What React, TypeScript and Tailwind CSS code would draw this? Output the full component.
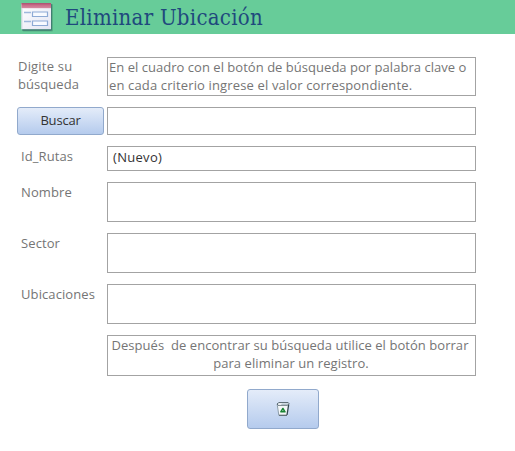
import React from "react";

const box = "w-[369px] shrink-0 border border-[#a3a3a3] bg-white";
const label = "w-[86px] shrink-0 pl-1 pt-px whitespace-nowrap leading-[18px] tracking-[0.1px]";

function FormIcon() {
  return (
    <svg width="34" height="32" viewBox="0 0 34 32" className="shrink-0">
      <defs>
        <linearGradient id="paper" x1="0" y1="0" x2="1" y2="1">
          <stop offset="0" stopColor="#ffffff" />
          <stop offset="1" stopColor="#e3e5f3" />
        </linearGradient>
        <linearGradient id="bar" x1="0" y1="0" x2="0" y2="1">
          <stop offset="0" stopColor="#bd5878" />
          <stop offset="1" stopColor="#d68aa2" />
        </linearGradient>
      </defs>
      <rect x="2.5" y="3" width="30.5" height="27.5" rx="1" fill="#38765f" opacity=".35" />
      <rect x="2" y="3" width="30" height="26.7" rx="1" fill="#315d65" opacity=".6" />
      <rect x="1.5" y="2.2" width="29.5" height="26" fill="url(#paper)" />
      <rect x="1.5" y="2.2" width="29.5" height="5" fill="url(#bar)" />
      <path d="M1.5 2.7H31" stroke="#a95070" />
      <path d="M2 7.2V28.2" stroke="#d8d9e5" />
      <path d="M4 11.5h7M4 20.5h7" stroke="#9eb8dc" strokeWidth="1.4" />
      <path d="M12.5 11h15v4.5h-15zM12.5 20h15v4.5h-15z" fill="#f8faff" stroke="#8eaad5" strokeWidth="1.2" />
    </svg>
  );
}

function BinIcon() {
  return (
    <svg width="14" height="16" viewBox="0 0 14 16">
      <path d="M1 3.5L2.7 14.5H10.8L13 3.5Z" fill="#f4f7f8" />
      <path d="M1.2 3.5L2.8 14" stroke="#8b9daa" />
      <path d="M12.7 3.5L11 14" stroke="#33454e" strokeWidth="1.3" />
      <path d="M2.8 14.3H11" stroke="#53636b" strokeWidth="1.2" />
      <path d="M1 3L3 1.6H12.2L13 2.6L11.7 4.2H2Z" fill="#dce7ef" stroke="#53636b" />
      <path d="M2.2 2.5H6L5 3.7H2.2Z" fill="#ffffff" />
      <path d="M6.9 7.5L9 10.8H4.8Z" fill="none" stroke="#198433" strokeWidth="1.5" strokeLinejoin="round" />
    </svg>
  );
}

export default function App() {
  return (
    <main className="h-[451px] w-[515px] overflow-hidden bg-white font-['Open_Sans','Noto_Sans',sans-serif] text-[13px] text-[#757575]">
      <header className="flex h-[34px] items-start bg-[#67cc99] pl-5 pt-px">
        <FormIcon />
        <h1 className="ml-[11px] whitespace-nowrap pt-px font-['DejaVu_Serif_Condensed','DejaVu_Serif',serif] text-[22px] leading-[32px] tracking-[0.27px] text-[#1f497d] [font-stretch:condensed]">Eliminar Ubicación</h1>
      </header>
      <div className="flex flex-col gap-[11px] pl-[17px] pt-[23px]">
        <div className="flex h-[39px] gap-1">
          <div className="w-[86px] shrink-0 pl-px leading-[18px]">
            <p className="tracking-[0.2px]">Digite su</p>
            <p className="tracking-[0.05px]">búsqueda</p>
          </div>
          <div className={`${box} whitespace-nowrap pl-px leading-[18px]`}>
            <p className="tracking-[0.03px]">En el cuadro con el botón de búsqueda por palabra clave o</p>
            <p className="tracking-[0.14px]">en cada criterio ingrese el valor correspondiente.</p>
          </div>
        </div>
        <div className="flex h-7 gap-[3px]">
          <button className="w-[87px] shrink-0 rounded-[3px] border border-[#91a9cc] bg-linear-to-b from-[#e4ecf9] to-[#b5cbed] pb-0.5 text-[13px] leading-[24px] tracking-[-0.2px] text-[#333333]">Buscar</button>
          <div className={box} />
        </div>
        <div className="flex h-[25px] gap-1">
          <p className={label}>Id_Rutas</p>
          <div className={`${box} pl-[5px] leading-[21px] tracking-[0.3px] text-[#333333]`}>(Nuevo)</div>
        </div>
        <div className="flex h-10 gap-1"><p className={label}>Nombre</p><div className={box} /></div>
        <div className="flex h-10 gap-1"><p className={label}>Sector</p><div className={box} /></div>
        <div className="flex h-10 gap-1"><p className={label}>Ubicaciones</p><div className={box} /></div>
        <div className={`${box} ml-[90px] h-[41px] whitespace-pre pr-[3px] text-center leading-[18px]`}>
          <p className="tracking-[0.05px]">{"Después  de encontrar su búsqueda utilice el botón borrar"}</p>
          <p className="pl-0.5 tracking-[0.07px]">para eliminar un registro.</p>
        </div>
      </div>
      <button aria-label="Borrar" className="ml-[247px] mt-[13px] flex h-10 w-[72px] items-center justify-center rounded-[3px] border border-[#91a9cc] bg-linear-to-b from-[#e4ecf9] to-[#b5cbed]">
        <BinIcon />
      </button>
    </main>
  );
}
